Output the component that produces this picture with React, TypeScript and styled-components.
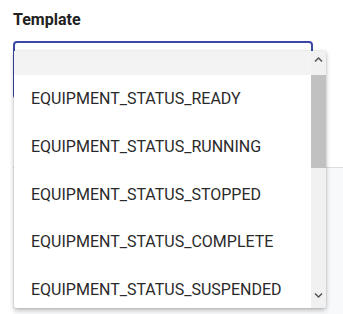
import React from "react";
import styled, { createGlobalStyle } from "styled-components";

const GlobalStyle = createGlobalStyle`
  html, body {
    margin: 0;
    padding: 0;
    background: #ffffff;
    font-family: Roboto, "Liberation Sans", sans-serif;
  }
`;

const Page = styled.div`
  position: relative;
  width: 343px;
  height: 314px;
  overflow: hidden;
  padding: 11px 0 0 13px;
  box-sizing: border-box;
`;

const Label = styled.div`
  font-size: 16px;
  font-weight: 700;
  color: #222;
  line-height: 18px;
  margin-bottom: 12px;
`;

const SelectBox = styled.div`
  width: 300px;
  height: 58px;
  border: 2px solid #3b48a6;
  border-radius: 4px;
  box-sizing: border-box;
`;

const Panel = styled.div`
  margin-top: 68px;
  height: 160px;
  border-top: 1px solid #dcdde0;
  background: #f8f9fb;
`;

const Dropdown = styled.div`
  position: absolute;
  top: 51px;
  left: 14px;
  width: 312px;
  height: 257px;
  display: flex;
  background: #fff;
  box-shadow: 0 2px 5px rgba(0, 0, 0, 0.28), 0 0 2px rgba(0, 0, 0, 0.12);
  border-radius: 0 0 3px 3px;
  overflow: hidden;
`;

const List = styled.div`
  flex: 1;
  overflow: hidden;
`;

const Option = styled.div<{ $empty?: boolean }>`
  height: ${(p) => (p.$empty ? "24px" : "47.7px")};
  display: flex;
  align-items: center;
  padding-left: 17px;
  font-size: 16px;
  color: #2a2a2a;
  background: ${(p) => (p.$empty ? "#f3f3f3" : "#fff")};
`;

const Scrollbar = styled.div`
  width: 15px;
  display: flex;
  flex-direction: column;
  background: #f1f1f1;
`;

const ArrowButton = styled.div<{ $top?: boolean }>`
  height: 24px;
  box-sizing: border-box;
  display: flex;
  align-items: ${(p) => (p.$top ? "flex-start" : "center")};
  padding-top: ${(p) => (p.$top ? "5px" : "0")};
  justify-content: center;
`;

const Thumb = styled.div`
  height: 93px;
  background: #c1c1c1;
`;

const Track = styled.div`
  flex: 1;
`;

const Chevron = ({ down }: { down?: boolean }) => (
  <svg width="9" height="6" viewBox="0 0 9 6">
    <path
      d={down ? "M0.5 1 L4.5 5 L8.5 1 L7.5 0 L4.5 3 L1.5 0 Z" : "M0.5 5 L4.5 1 L8.5 5 L7.5 6 L4.5 3 L1.5 6 Z"}
      fill="#505050"
    />
  </svg>
);

const options = [
  "EQUIPMENT_STATUS_READY",
  "EQUIPMENT_STATUS_RUNNING",
  "EQUIPMENT_STATUS_STOPPED",
  "EQUIPMENT_STATUS_COMPLETE",
  "EQUIPMENT_STATUS_SUSPENDED",
];

export default function App() {
  return (
    <>
      <GlobalStyle />
      <Page>
        <Label>Template</Label>
        <SelectBox />
        <Panel />
        <Dropdown>
          <List>
            <Option $empty />
            {options.map((o) => (
              <Option key={o}>{o}</Option>
            ))}
          </List>
          <Scrollbar>
            <ArrowButton $top>
              <Chevron />
            </ArrowButton>
            <Thumb />
            <Track />
            <ArrowButton>
              <Chevron down />
            </ArrowButton>
          </Scrollbar>
        </Dropdown>
      </Page>
    </>
  );
}
